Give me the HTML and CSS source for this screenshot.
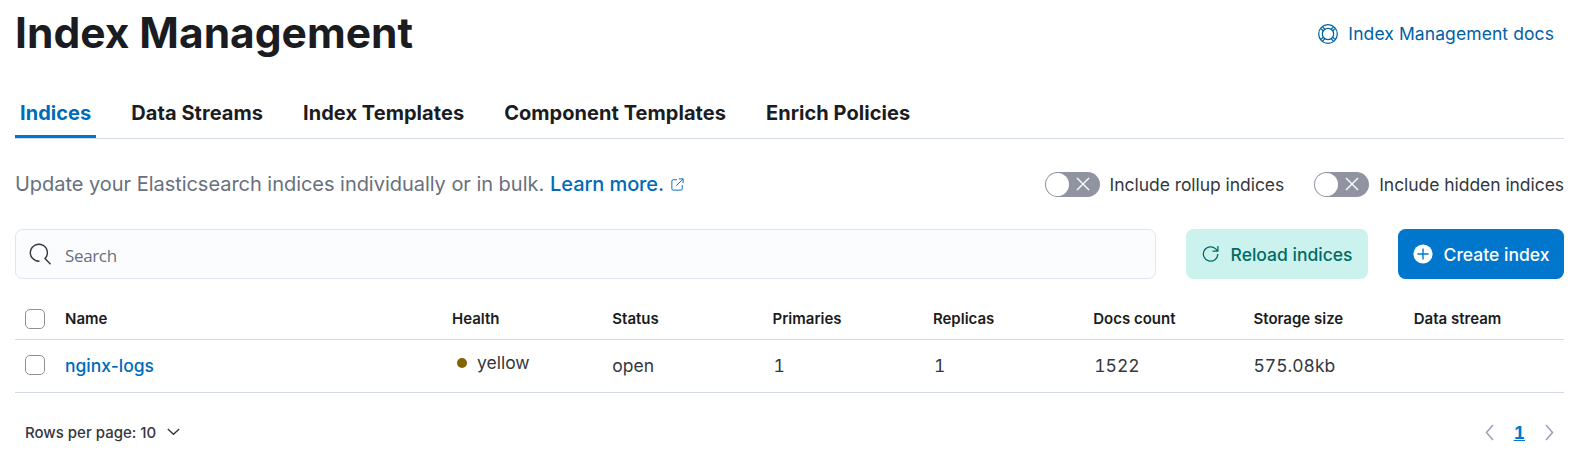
FILE: index.html
```
<!DOCTYPE html>
<html lang="en">
<head>
<meta charset="utf-8">
<title>Index Management</title>
<link rel="stylesheet" href="styles.css">
</head>
<body>
<main class="page">
  <header class="page-header">
    <h1 class="title"><span>Index Management</span></h1>
    <a class="docs-link"><svg width="20" height="20" viewBox="0 0 16 16" fill="none" stroke="currentColor"><circle cx="8" cy="8" r="7.45"/><circle cx="8" cy="8" r="4.5"/><path d="M2.4 3.7 4.3 5.6M3.7 2.4 5.6 4.3M13.6 3.7 11.7 5.6M12.3 2.4 10.4 4.3M2.4 12.3 4.3 10.4M3.7 13.6 5.6 11.7M13.6 12.3 11.7 10.4M12.3 13.6 10.4 11.7"/></svg><span>Index Management docs</span></a>
  </header>
  <nav class="tabs">
    <a class="tab tab-selected"><span>Indices</span></a>
    <a class="tab"><span>Data Streams</span></a>
    <a class="tab"><span>Index Templates</span></a>
    <a class="tab"><span>Component Templates</span></a>
    <a class="tab"><span>Enrich Policies</span></a>
  </nav>
  <section class="intro">
    <p class="description"><span>Update your Elasticsearch indices individually or in bulk.</span> <a class="learn">Learn more.</a><svg class="external" width="13" height="13" viewBox="1 1 15 15" fill="none" stroke="currentColor" stroke-width="1.100"><path d="M8 3H3.500A1.500 1.500 0 0 0 2 4.500v9A1.500 1.500 0 0 0 3.500 15h9a1.500 1.500 0 0 0 1.500-1.500V9M10 2h5v5M15 2 7 10"/></svg></p>
    <div class="switches">
      <label class="switch"><span class="track"><span class="thumb"></span><svg width="14" height="14" viewBox="0 0 14 14" fill="none" stroke="#fff" stroke-width="1.400"><path d="m1 1 12 12M13 1 1 13"/></svg></span><span>Include rollup indices</span></label>
      <label class="switch"><span class="track"><span class="thumb"></span><svg width="14" height="14" viewBox="0 0 14 14" fill="none" stroke="#fff" stroke-width="1.400"><path d="m1 1 12 12M13 1 1 13"/></svg></span><span>Include hidden indices</span></label>
    </div>
  </section>
  <section class="toolbar">
    <div class="search"><svg width="22" height="22" viewBox="0 0 22 22" fill="none" stroke="#343741" stroke-width="1.400"><path d="M10.500 18.200A8.500 8.500 0 1 1 16 15.600L21.500 21.300"/></svg><span>Search</span></div>
    <button class="button reload"><svg width="18" height="18" viewBox="0 0 18 18" fill="none" stroke="currentColor" stroke-width="1.250"><path d="M15.800 9a7.200 7.200 0 1 1-2.100-5.100q1 1 1.600 2.100M10.500 6.200h5.400V1"/></svg><span>Reload indices</span></button>
    <button class="button create"><svg width="20" height="20" viewBox="0 0 20 20"><circle cx="10" cy="10" r="9.600" fill="#fff"/><path d="M10 4.400v11.200M4.400 10h11.200" stroke="#0077cc" stroke-width="1.400"/></svg><span>Create index</span></button>
  </section>
  <section class="table">
    <div class="row head">
      <i class="checkbox"></i><span>Name</span><span>Health</span><span>Status</span><span>Primaries</span><span>Replicas</span><span>Docs count</span><span>Storage size</span><span>Data stream</span>
    </div>
    <div class="row data">
      <i class="checkbox"></i><a class="name">nginx-logs</a><span class="health"><i class="dot"></i><span>yellow</span></span><span>open</span><span class="num">1</span><span class="num">1</span><span class="num">1522</span><span>575.08kb</span><span></span>
    </div>
  </section>
  <footer class="footer">
    <div class="rows-per-page"><span>Rows per page: 10</span><svg width="13" height="8" viewBox="0 0 13 8" fill="none" stroke="currentColor" stroke-width="1.400"><path d="m.8 1 5.700 5.200L12.200 1"/></svg></div>
    <div class="pager">
      <svg width="9" height="17" viewBox="0 0 9 17" fill="none" stroke="#98a2b3" stroke-width="1.500"><path d="M8 1 1.500 8.500 8 16"/></svg>
      <a class="current">1</a>
      <svg width="9" height="17" viewBox="0 0 9 17" fill="none" stroke="#98a2b3" stroke-width="1.500"><path d="m1 1 6.500 7.500L1 16"/></svg>
    </div>
  </footer>
</main>
</body>
</html>
```
FILE: styles.css
```
* { box-sizing: border-box; }
body {
  margin: 0;
  background: #fff;
  color: #343741;
  font: 17.5px/25px Inter, "Liberation Sans", sans-serif;
}
.page { height: 457px; padding: 0 19px 0 15px; overflow: hidden; }
.page-header { display: flex; justify-content: space-between; height: 85px; padding-right: 10px; }
.title { margin: 8px 0 0; color: #1a1c21; font-size: 42.5px; line-height: 50px; font-weight: 700; }
.docs-link { display: flex; align-items: center; gap: 10px; height: 25px; margin-top: 21px; color: #0061a6; letter-spacing: .09px; }
.tabs { display: flex; gap: 30px; height: 54px; border-bottom: 1px solid #d3dae6; }
.tab { height: 53px; padding: 13px 5px 0; color: #1a1c21; font-size: 20px; line-height: 30px; font-weight: 700; letter-spacing: .05px; }
.tab-selected { color: #006bb8; border-bottom: 3px solid #0077cc; }
.intro { display: flex; align-items: center; justify-content: space-between; height: 90px; }
.description { margin: 0; display: flex; align-items: center; color: #69707d; font-size: 20px; letter-spacing: -.035px; white-space: pre; }
.learn { color: #006bb8; font-weight: 500; margin-left: 6px; letter-spacing: -.1px; }
.external { color: #006bb8; margin: 1px 0 0 7px; }
.switches { display: flex; gap: 30px; letter-spacing: -.05px; }
.switch { display: flex; align-items: center; gap: 10px; }
.track { display: flex; align-items: center; justify-content: space-between; width: 55px; height: 25px; padding: 0 10px 0 1px; border-radius: 13px; background: #9093a0; }
.thumb { width: 23px; height: 23px; border-radius: 50%; background: #fff; }
.toolbar { display: grid; grid-template-columns: 1fr 182px 166px; gap: 30px; height: 50px; }
.search { display: flex; align-items: center; gap: 14px; padding: 0 13px; border: 1px solid #e0e4f0; border-radius: 7.5px; background: #fbfcfd; color: #69707d; font-family: "Open Sans", "Noto Sans", sans-serif; font-size: 17px; letter-spacing: -.35px; }
.search span { padding-top: 2px; }
.button { display: flex; align-items: center; justify-content: center; gap: 11px; padding: 0; border: 0; border-radius: 7.5px; font: 500 17.5px/25px Inter, sans-serif; }
.button svg { margin-bottom: 1px; }
.reload { background: #ccf2ee; color: #006b63; }
.create { background: #0077cc; color: #fff; }
.table { padding-top: 21px; }
.row { display: grid; grid-template-columns: 40px 387px repeat(7, 160.3px); align-items: center; padding: 0 0 2px 10px; border-bottom: 1px solid #d3dae6; white-space: nowrap; }
.head { height: 40px; color: #1a1c21; font-size: 15px; font-weight: 600; }
.data { height: 53px; font-variant-numeric: tabular-nums; }
.num { padding-left: 1px; }
.checkbox { width: 20px; height: 20px; border: 1px solid #919191; border-radius: 5px; background: #fff; }
.name { color: #006bb8; font-weight: 500; font-variant-numeric: normal; }
.health { display: flex; align-items: center; gap: 10px; padding: 0 0 5px 5px; }
.dot { width: 10px; height: 10px; border-radius: 50%; background: #836500; }
.footer { display: flex; align-items: center; justify-content: space-between; height: 80px; padding: 0 10px 2px; }
.rows-per-page { display: flex; align-items: center; gap: 11px; font-size: 15px; font-weight: 500; }
.pager { display: flex; align-items: center; gap: 20px; font-variant-numeric: tabular-nums; }
.current { color: #0077cc; font-weight: 700; text-decoration: underline; }
```
